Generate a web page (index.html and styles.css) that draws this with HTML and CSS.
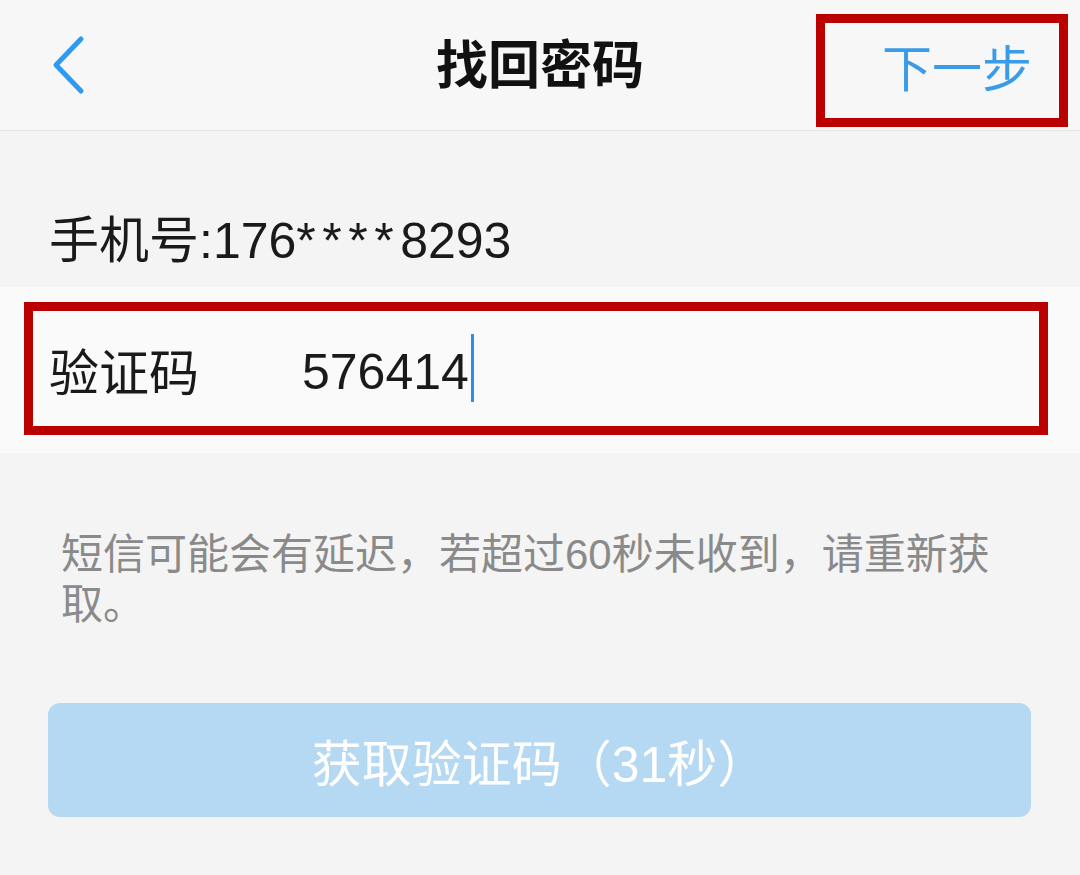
FILE: index.html
```html
<!DOCTYPE html>
<html lang="zh-CN">

<head>
  <meta charset="UTF-8">
  <meta name="viewport" content="width=device-width, initial-scale=1.0">
  <title>找回密码</title>
  <link rel="stylesheet" href="styles.css">
</head>

<body>
  <header class="topbar">
    <a class="back" href="#">
      <svg width="36" height="62" viewBox="0 0 36 62">
        <polyline points="29,5 4,31 29,57" fill="none" stroke="#2f9bef" stroke-width="5" stroke-linecap="round" stroke-linejoin="round" />
      </svg>
    </a>
    <h1 class="title">找回密码</h1>
    <a class="next" href="#">下一步</a>
  </header>

  <div class="phone">手机号:176<span class="mask">****</span>8293</div>

  <div class="code-row">
    <div class="code-box">
      <span class="code-label">验证码</span>
      <span class="code-value">576414</span><span class="caret"></span>
    </div>
  </div>

  <p class="hint">短信可能会有延迟，若超过60秒未收到，请重新获取。</p>

  <button class="resend" disabled>获取验证码（31秒）</button>
</body>

</html>
```

FILE: styles.css
```css
body {
  margin: 0;
  background: #f4f4f4;
  font-family: "Liberation Sans", "Noto Sans CJK SC", sans-serif;
  color: #1a1a1a;
}

.topbar {
  height: 130px;
  background: #f7f7f7;
  border-bottom: 1px solid #e6e6e6;
  display: grid;
  grid-template-columns: 1fr auto 1fr;
  align-items: center;
  padding: 0 12px;
}

.back {
  display: flex;
  align-items: center;
  justify-self: start;
  margin: 0 0 0 40px;
}

.back svg {
  display: block;
}

.title {
  margin: 0 0 8px;
  font-size: 52px;
  font-weight: bold;
  color: #111;
  font-family: "Noto Sans CJK SC", sans-serif;
}

.next {
  justify-self: end;
  align-self: end;
  box-sizing: border-box;
  width: 252px;
  height: 113px;
  margin-bottom: 3px;
  border: 9px solid #bb0000;
  display: flex;
  align-items: center;
  justify-content: flex-end;
  padding: 0 27px 11px 0;
  font-size: 50px;
  color: #3a9be9;
  text-decoration: none;
  font-family: "Noto Sans CJK SC", sans-serif;
}

.phone {
  height: 60px;
  line-height: 60px;
  padding: 80px 49px 16px;
  font-size: 50px;
}

.mask {
  letter-spacing: 6.5px;
}

.code-row {
  background: #fafafa;
  padding: 15px 32px 18px 24px;
}

.code-box {
  box-sizing: border-box;
  height: 133px;
  border: 9px solid #bb0000;
  display: flex;
  align-items: center;
  padding: 6px 0 0 16px;
  font-size: 50px;
}

.code-label {
  width: 253px;
  margin-top: -6px;
}

.caret {
  display: inline-block;
  width: 3px;
  height: 68px;
  margin-left: 2px;
  margin-top: -8px;
  background: #2f8fe6;
}

.hint {
  margin: 0;
  padding: 77px 62px 0 61px;
  font-size: 42px;
  line-height: 50px;
  color: #8a8a8a;
}

.resend {
  display: block;
  width: 983px;
  height: 114px;
  margin: 73px 0 0 48px;
  border: none;
  border-radius: 12px;
  background: #b5d8f3;
  color: #fff;
  font-family: "Liberation Sans", "Noto Sans CJK SC", sans-serif;
  font-size: 50px;
}
```
